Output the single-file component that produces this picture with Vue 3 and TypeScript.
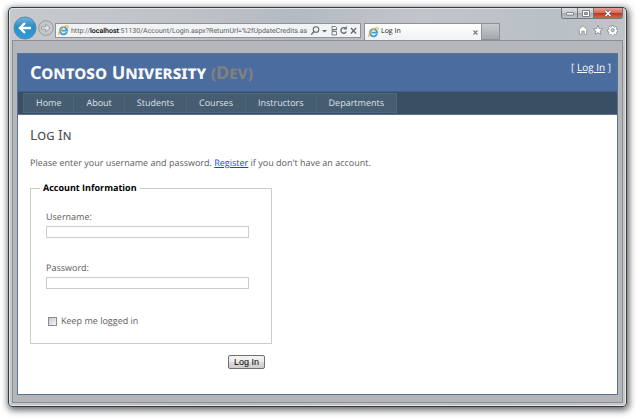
<script setup lang="ts">
import { ref } from 'vue'

const menu: string[] = ['Home', 'About', 'Students', 'Courses', 'Instructors', 'Departments']
const username = ref('')
const password = ref('')
const remember = ref(false)
</script>

<template>
  <div class="desktop">
    <div class="window">
      <div class="toolbar">
        <div class="travel">
          <button class="nav-btn" type="button" aria-label="Back">
            <svg width="24" height="24" viewBox="0 0 24 24">
              <defs>
                <linearGradient id="back" x1="0" y1="0" x2="0" y2="1">
                  <stop offset="0" stop-color="#6fb4dc" />
                  <stop offset="0.45" stop-color="#2b8cc6" />
                  <stop offset="1" stop-color="#2ea0da" />
                </linearGradient>
              </defs>
              <circle cx="12" cy="12" r="11" fill="url(#back)" stroke="#5b87a5" />
              <path d="M18 12H8M12 7l-5 5 5 5" fill="none" stroke="#fff" stroke-width="2.4" />
            </svg>
          </button>
          <button class="nav-btn" type="button" aria-label="Forward">
            <svg width="16" height="16" viewBox="0 0 16 16">
              <circle cx="8" cy="8" r="7.3" fill="#c5c8cb" stroke="#96999d" />
              <path d="M3.5 6.8h4.2V4.2L12 8l-4.3 3.8V9.2H3.5z" fill="#e4e6e8" stroke="#8d9093" stroke-width="0.8" />
            </svg>
          </button>
        </div>
        <div class="address">
          <svg class="ie" width="11" height="11" viewBox="0 0 11 11">
            <path d="M8.9 7.2A3.6 3.6 0 1 1 9.2 5.6H3.4" fill="none" stroke="#3b9ddd" stroke-width="1.9" />
            <path d="M1.2 9.9C-.6 8 4 2 8 .9c2-.5 2.7.5 2 2" fill="none" stroke="#e8b430" stroke-width="1.1" />
          </svg>
          <span class="url">http://<b>localhost</b>:51130/Account/Login.aspx?ReturnUrl=%2fUpdateCredits.as</span>
          <svg class="tools" width="48" height="12" viewBox="0 0 48 12" fill="none" stroke="#666">
            <circle cx="6" cy="4.5" r="2.8" stroke-width="1.1" />
            <path d="M3.9 6.6L1.3 9.6" stroke-width="1.4" />
            <path d="M12 5h5l-2.5 2.6z" fill="#666" stroke="none" />
            <path d="M22 1.5h3.5l1 1v2h-4.5zM22 6.5h4.5v3.5h-4.5zM21.5 5.5l5.5-1" stroke-width="0.8" />
            <path d="M35.5 3.3A2.8 2.8 0 1 0 36.3 6.5" stroke-width="1.3" />
            <path d="M36.8 1v3.4h-3.4z" fill="#666" stroke="none" />
            <path d="M41 3l5 5.5M46 3l-5 5.5" stroke-width="1.3" />
          </svg>
        </div>
        <div class="tab">
          <svg class="ie" width="11" height="11" viewBox="0 0 11 11">
            <path d="M8.9 7.2A3.6 3.6 0 1 1 9.2 5.6H3.4" fill="none" stroke="#3b9ddd" stroke-width="1.9" />
            <path d="M1.2 9.9C-.6 8 4 2 8 .9c2-.5 2.7.5 2 2" fill="none" stroke="#e8b430" stroke-width="1.1" />
          </svg>
          <span class="tab-title">Log In</span>
          <button class="tab-close" type="button" aria-label="Close tab">
            <svg width="5" height="5" viewBox="0 0 5 5"><path d="M.5 .5l4 4M4.5 .5l-4 4" stroke="#777" stroke-width="1.1" /></svg>
          </button>
        </div>
        <button class="new-tab" type="button" aria-label="New tab"></button>
        <div class="commands">
          <div class="caption">
            <button class="cap" type="button" aria-label="Minimize">
              <svg width="8" height="6" viewBox="0 0 8 6"><rect x=".5" y="2.5" width="7" height="2.5" rx=".5" fill="#fff" stroke="#666a75" stroke-width=".8" /></svg>
            </button>
            <button class="cap" type="button" aria-label="Maximize">
              <svg width="8" height="7" viewBox="0 0 8 7"><path d="M.5 .5h7v6h-7zM2.5 2.5h3v2h-3z" fill="#fff" fill-rule="evenodd" stroke="#666a75" stroke-width=".8" /></svg>
            </button>
            <button class="cap close" type="button" aria-label="Close">
              <svg width="8" height="7" viewBox="0 0 8 7"><path d="M1.5 1l5 5M6.5 1l-5 5" stroke="#695060" stroke-width="2.8" /><path d="M1.5 1l5 5M6.5 1l-5 5" stroke="#fff" stroke-width="1.6" /></svg>
            </button>
          </div>
          <svg class="quick" width="40" height="10" viewBox="0 0 40 10" fill="#fff" stroke="#85888c" stroke-width=".8">
            <path d="M5 .7L.6 4.8l.8 1V9.4h2.4V6.2h2.4v3.2h2.4V5.8l.8-1z" />
            <path d="M20 .4l1.3 3.1 3.4.3-2.6 2.2.9 3.4-3-1.8-3 1.8.9-3.4-2.6-2.2 3.4-.3z" />
            <path d="M33.9 .5h1.6l.3 1.2 1 .4 1.1-.6 1.1 1.1-.6 1.1.4 1 1.1.2v1.5l-1.1.3-.4 1 .6 1.1-1.1 1.1-1.1-.6-1 .4-.3 1.1h-1.6l-.3-1.1-1-.4-1.1.6-1.1-1.1.6-1.1-.4-1-1.2-.3V4.9l1.2-.2.4-1-.6-1.1 1.1-1.1 1.1.6 1-.4z" />
            <circle cx="34.7" cy="5.1" r="1.6" fill="#c4c8cc" />
          </svg>
        </div>
      </div>

      <div class="client">
        <div class="page">
          <header class="header">
            <h1>Contoso University <span class="dev">(Dev)</span></h1>
            <div class="login-status">[ <a href="#login">Log In</a> ]</div>
          </header>
          <nav class="menu">
            <a v-for="item in menu" :key="item" :href="'#' + item.toLowerCase()">{{ item }}</a>
          </nav>
          <main class="main">
            <h2>Log In</h2>
            <p>Please enter your username and password. <a href="#register">Register</a> if you don't have an account.</p>
            <form class="account" @submit.prevent>
              <fieldset>
                <legend>Account Information</legend>
                <div class="field">
                  <label for="username">Username:</label>
                  <input id="username" v-model="username" type="text" />
                </div>
                <div class="field">
                  <label for="password">Password:</label>
                  <input id="password" v-model="password" type="password" />
                </div>
                <div class="remember">
                  <input id="remember" v-model="remember" type="checkbox" />
                  <label for="remember">Keep me logged in</label>
                </div>
              </fieldset>
              <div class="actions"><button type="submit">Log In</button></div>
            </form>
          </main>
        </div>
      </div>
    </div>
  </div>
</template>

<style>
body {
  background: #fff;
}
</style>

<style scoped>
* {
  box-sizing: border-box;
}
.desktop {
  display: flex;
  min-height: 100vh;
  padding: 7px 11px 12px 8px;
  font-family: "Open Sans", "Noto Sans", sans-serif;
  font-size: 9px;
  line-height: 14px;
  color: #5c5c5c;
  text-rendering: geometricPrecision;
}
button {
  margin: 0;
  padding: 0;
}
.window {
  flex: 1;
  min-width: 0;
  display: flex;
  flex-direction: column;
  border: 1px solid #3a3d40;
  border-radius: 4px;
  background: linear-gradient(100deg, #c6c9cd 0, #bfc3c8 25%, #b3bac1 42%, #c1c5ca 60%, #b9c0c6 80%, #c5c9cc 100%);
  box-shadow: inset 0 0 0 1px #dfe4e8, 1px 2px 7px 1px rgba(0, 0, 0, 0.65);
}
.toolbar {
  display: flex;
  align-items: flex-end;
  height: 32px;
  padding: 0 3px 0 4px;
}
.travel {
  display: flex;
  align-items: center;
  gap: 1px;
  height: 24px;
}
.nav-btn {
  display: flex;
  border: 0;
  background: none;
}
.address {
  flex: 300;
  min-width: 0;
  display: flex;
  align-items: center;
  height: 15px;
  margin: 0 0 2px 1px;
  padding: 0 2px;
  border: 1px solid #8d9298;
  background: #f2f3f4;
}
.ie,
.tools {
  flex: none;
}
.url {
  flex: 1;
  min-width: 0;
  margin: 0 0 0 2px;
  overflow: hidden;
  white-space: nowrap;
  font-family: Roboto, "Open Sans", sans-serif;
  font-size: 7px;
  line-height: 12px;
  color: #606060;
}
.url b {
  font-weight: 500;
  color: #000;
}
.tab {
  flex: 110;
  min-width: 0;
  display: flex;
  align-items: center;
  height: 17px;
  margin-left: 3px;
  padding: 0 3px;
  border: 1px solid #8d9298;
  border-bottom: 0;
  background: linear-gradient(#fff, #f1f2f3);
}
.tab-title {
  flex: 1;
  margin-left: 2px;
  font-size: 7px;
  color: #111;
}
.tab-close {
  display: flex;
  border: 0;
  background: none;
}
.new-tab {
  width: 18px;
  height: 17px;
  border: 1px solid #8d9298;
  border-left: 0;
  background: linear-gradient(#c8cbce, #a5a9ad);
}
.commands {
  flex: 123;
  display: flex;
  flex-direction: column;
  align-items: flex-end;
  height: 32px;
}
.caption {
  display: flex;
  height: 11px;
  border: 1px solid #74777c;
  border-top: 0;
  border-radius: 0 0 3px 3px;
  overflow: hidden;
}
.cap {
  display: flex;
  align-items: center;
  justify-content: center;
  width: 16px;
  border: 0;
  border-right: 1px solid #74777c;
  background: linear-gradient(#dcdee0 0, #c8cbce 45%, #a6abb0 50%, #c0c4c8 100%);
}
.cap.close {
  width: 28px;
  border-right: 0;
  background: linear-gradient(#e5a49a 0, #d46c5c 45%, #b93522 50%, #d4664e 100%);
}
.quick {
  margin: 6px 5px 0 0;
}
.client {
  flex: 1;
  display: flex;
  margin: 0 3px 3px;
  padding: 12px 4px 7px;
  border: 1px solid #8b8e92;
  background: #b4b6ba;
}
.page {
  flex: 1;
  min-width: 0;
  border: 1px solid #5b7392;
  background: #fff;
}
.header {
  display: flex;
  justify-content: space-between;
  height: 37px;
  padding: 6px 6px 0 12px;
  background: #4b6c9e;
  color: #f0f4fa;
}
h1,
h2 {
  margin: 0;
  font-family: "Noto Sans", "Open Sans", sans-serif;
  font-variant: small-caps;
}
h1 {
  font-size: 18px;
  font-weight: 700;
  line-height: 26px;
  color: #f9f9f9;
}
.dev {
  color: #808080;
}
.login-status {
  font-size: 10px;
}
.login-status a {
  color: #fff;
}
.menu {
  display: flex;
  height: 24px;
  padding: 1px 5px;
  border-top: 1px solid #3d5f8f;
  border-bottom: 1px solid #60728a;
  background: #3a4f63;
}
.menu a {
  height: 20px;
  padding: 0 12px;
  border: 1px solid #4e667d;
  border-right-width: 0;
  background: #465c71;
  color: #dde4ec;
  line-height: 18px;
  text-decoration: none;
}
.menu a:last-child {
  border-right-width: 1px;
}
.main {
  padding: 12px;
}
h2 {
  font-size: 14px;
  font-weight: 400;
  line-height: 18px;
  color: #505050;
}
p {
  margin: 11px 0;
}
p a {
  color: #034af3;
}
.account {
  width: 242px;
}
fieldset {
  margin: 0;
  padding: 15px 15px;
  border: 1px solid #ccc;
}
legend {
  margin-left: -6px;
  padding: 0 3px;
  font-weight: 700;
  color: #000;
}
.field {
  display: flex;
  flex-direction: column;
  gap: 2px;
  margin-bottom: 23px;
}
.field input {
  width: 203px;
  height: 12px;
  padding: 0 2px;
  border: 1px solid #ccc;
  font-size: 8px;
}
.remember {
  display: flex;
  align-items: center;
  gap: 4px;
  padding-top: 2px;
}
.remember input {
  appearance: none;
  width: 9px;
  height: 9px;
  margin: 0 0 0 2px;
  border: 1px solid #8a8c90;
  background: linear-gradient(135deg, #c8cbd0, #f4f4f4);
}
.remember input:checked {
  background: #446;
}
.actions {
  display: flex;
  justify-content: flex-end;
  padding: 11px 7px 0;
}
.actions button {
  height: 14px;
  padding: 0 5px;
  border: 1px solid #707070;
  border-radius: 2px;
  background: linear-gradient(#f3f3f3 0, #ebebeb 50%, #dadada 50%, #cdcdcd 100%);
  font-family: "Liberation Sans", Arial, sans-serif;
  font-size: 9px;
  line-height: 12px;
  color: #000;
}
</style>
